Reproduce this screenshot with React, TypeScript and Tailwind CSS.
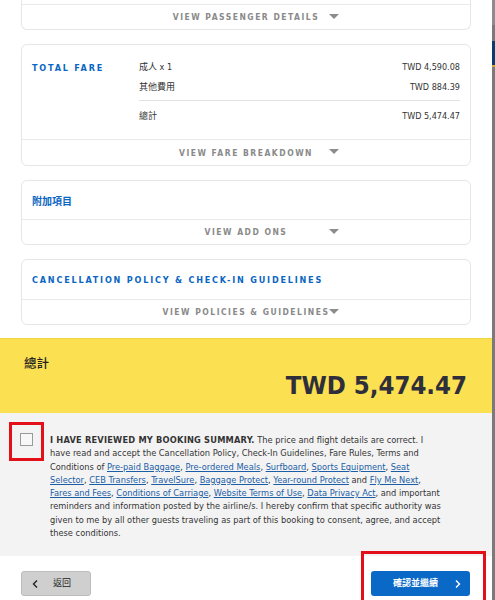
const sans = "font-['DejaVu_Sans_Condensed','DejaVu_Sans','Noto_Sans_CJK_TC',sans-serif]";

function Caret() {
  return (
    <span className="absolute left-[307px] top-[9px] h-0 w-0 border-x-[5px] border-t-[5px] border-x-transparent border-t-[#8c8c8c]" />
  );
}

function CardFooter({ label, tall }: { label: string; tall?: boolean }) {
  return (
    <div
      className={`relative flex items-center justify-center border-t border-[#e9e9e9] ${tall ? "h-[26px]" : "h-[25px]"}`}
    >
      <span className="pt-[1px] text-[8.5px] font-bold tracking-[1.5px] text-[#8a8a8a]">{label}</span>
      <Caret />
    </div>
  );
}

function Card({ title, footer, cjk, body }: { title: string; footer: string; cjk?: boolean; body: string }) {
  return (
    <div className="mt-[14px] rounded-[6px] border border-[#e6e6e6] bg-white">
      <div className={`flex items-center px-[10px] pt-[3px] ${body}`}>
        {cjk ? (
          <span className="text-[10px] font-bold text-[#0a66c2]">{title}</span>
        ) : (
          <span className="text-[9px] font-bold tracking-[1.8px] text-[#0a66c2]">{title}</span>
        )}
      </div>
      <CardFooter label={footer} />
    </div>
  );
}

function Link({ children }: { children: string }) {
  return <span className="text-[#1b5ea6] underline">{children}</span>;
}

function FareRow({ label, amount, gap }: { label: string; amount: string; gap?: string }) {
  return (
    <div className={`flex h-[14px] items-center justify-between pt-[3px] ${gap ?? ""}`}>
      <span>{label}</span>
      <span>{amount}</span>
    </div>
  );
}

export default function App() {
  return (
    <div className={`flex h-[600px] w-[495px] overflow-hidden bg-white ${sans}`}>
      <div className="relative flex w-[492px] flex-col">
        {/* summary cards */}
        <div className="px-[21px] pb-[13px]">
          <div className="rounded-b-[6px] border-x border-b border-[#e6e6e6]">
            <div className="h-[4px]" />
            <CardFooter label="VIEW PASSENGER DETAILS" />
          </div>

          <div className="mt-[14px] rounded-[6px] border border-[#e6e6e6]">
            <div className="flex h-[94px] px-[10px] pt-[14px]">
              <div className="w-[107px] pt-[2px] text-[9px] font-bold leading-[14px] tracking-[1.8px] text-[#0a66c2]">
                TOTAL FARE
              </div>
              <div className="flex-1 text-[9px] text-[#333]">
                <FareRow label="成人 x 1" amount="TWD 4,590.08" />
                <FareRow label="其他費用" amount="TWD 884.39" gap="mt-[6px]" />
                <div className="mt-[7px] border-t border-[#e2e2e2]" />
                <FareRow label="總計" amount="TWD 5,474.47" gap="mt-[7px]" />
              </div>
            </div>
            <CardFooter label="VIEW FARE BREAKDOWN" tall />
          </div>

          <Card title="附加項目" footer="VIEW ADD ONS" cjk body="h-[38px]" />
          <Card title="CANCELLATION POLICY & CHECK-IN GUIDELINES" footer="VIEW POLICIES & GUIDELINES" body="h-[39px]" />
        </div>

        {/* total */}
        <div className="h-[75px] border-t border-[#f0d540] bg-[#fbe052] pl-[24px] pr-[25px] pt-[16px]">
          <div className="text-[12.5px] font-medium leading-[18px] text-[#222]">總計</div>
          <div className="mt-[-3px] text-right text-[25.5px] font-bold leading-[30px] text-[#2e2f3a]">TWD 5,474.47</div>
        </div>

        {/* agreement */}
        <div className="flex h-[143px] bg-[#f3f3f3] pl-[20px] pt-[20px]">
          <div className="h-[13px] w-[13px] shrink-0 border border-[#9a9a9a] bg-[#f7f7f7]" />
          <p className="ml-[17px] w-[420px] whitespace-nowrap text-[9.2px] leading-[13.3px] text-[#333]">
            <span className="font-bold tracking-[0.2px]">I HAVE REVIEWED MY BOOKING SUMMARY.</span> The price and flight
            details are correct. I
            <br />
            have read and accept the Cancellation Policy, Check-In Guidelines, Fare Rules, Terms and
            <br />
            Conditions of <Link>Pre-paid Baggage</Link>, <Link>Pre-ordered Meals</Link>, <Link>Surfboard</Link>,{" "}
            <Link>Sports Equipment</Link>, <Link>Seat</Link>
            <br />
            <Link>Selector</Link>, <Link>CEB Transfers</Link>, <Link>TravelSure</Link>, <Link>Baggage Protect</Link>,{" "}
            <Link>Year-round Protect</Link> and <Link>Fly Me Next</Link>,
            <br />
            <Link>Fares and Fees</Link>, <Link>Conditions of Carriage</Link>, <Link>Website Terms of Use</Link>,{" "}
            <Link>Data Privacy Act</Link>, and important
            <br />
            reminders and information posted by the airline/s. I hereby confirm that specific authority was
            <br />
            given to me by all other guests traveling as part of this booking to consent, agree, and accept
            <br />
            these conditions.
          </p>
        </div>

        {/* buttons */}
        <div className="flex flex-1 items-start justify-between px-[21px] pr-[22px] pt-[15px]">
          <button className="flex h-[25px] w-[70px] items-center rounded-[3px] border border-[#bdbdbd] bg-[#cfcfcf] pl-[10px] text-[9px] text-[#222]">
            <svg width="6" height="8" viewBox="0 0 6 8" fill="none" stroke="#222" strokeWidth="1.4">
              <polyline points="5,0.5 1.5,4 5,7.5" />
            </svg>
            <span className="ml-[15px]">返回</span>
          </button>
          <button className="flex h-[25px] w-[99px] items-center rounded-[3px] bg-[#0a69c7] pl-[22px] text-[9px] font-bold text-white">
            <span>確認並繼續</span>
            <svg className="ml-[17px]" width="6" height="8" viewBox="0 0 6 8" fill="none" stroke="#fff" strokeWidth="1.4">
              <polyline points="1,0.5 4.5,4 1,7.5" />
            </svg>
          </button>
        </div>

        {/* highlight boxes */}
        <div className="absolute left-[9px] top-[422px] h-[39px] w-[35px] border-[3px] border-[#e3101a]" />
        <div className="absolute left-[361px] top-[551px] h-[52px] w-[125px] border-[3px] border-[#e3101a]" />
      </div>

      {/* window edge */}
      <div className="flex w-[3px] flex-col bg-[#7a7a7a]">
        <div className="h-[25px] bg-[#8c8c8c]" />
        <div className="mt-[16px] h-[24px] bg-[#0c3b6d]" />
        <div className="h-[2px] bg-[#d9a520]" />
      </div>
    </div>
  );
}
